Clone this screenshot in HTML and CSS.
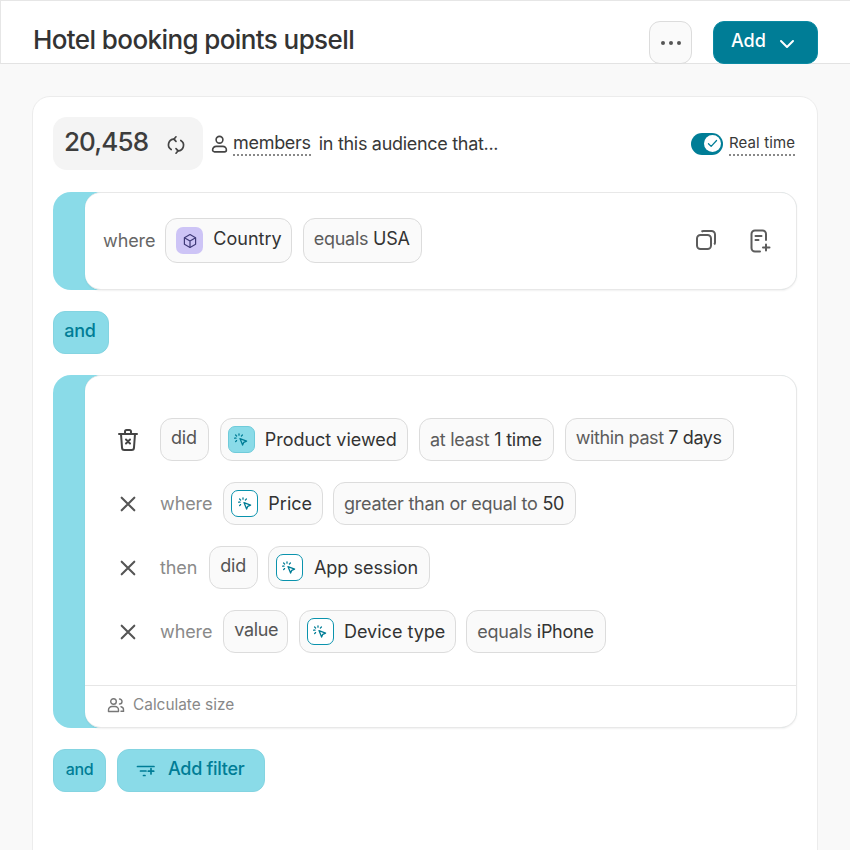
FILE: index.html
```html
<!DOCTYPE html>
<html>
<head>
    <title>Hotel booking points upsell</title>
    <link rel="stylesheet" href="styles.css">
</head>
<body>
    <svg class="defs" width="0" height="0">
        <symbol id="click" viewBox="0 0 16 16">
            <path d="M7 6.600l6.600 2.500-2.800 1.200-1.200 2.800z" fill="none" stroke="currentColor" stroke-width="1.300" stroke-linejoin="round"/>
            <path d="M6 1.800v1.400M2.600 3l1 1M1.600 6.200H3M2.600 9.600l1-1M9.400 3l-1 1" fill="none" stroke="currentColor" stroke-width="1.300" stroke-linecap="round" stroke-dasharray="1.200 .1"/>
        </symbol>
        <symbol id="cross" viewBox="0 0 20 20">
            <path d="M3 3l14 14M17 3L3 17" fill="none" stroke="currentColor" stroke-width="2.300" stroke-linecap="round"/>
        </symbol>
    </svg>

    <header class="topbar">
        <h1>Hotel booking points upsell</h1>
        <button class="more-btn">
            <svg width="24" height="6" viewBox="0 0 24 6"><circle cx="4" cy="3" r="2" /><circle cx="12" cy="3" r="2" /><circle cx="20" cy="3" r="2" /></svg>
        </button>
        <button class="add-btn">Add
            <svg width="16" height="10" viewBox="0 0 16 10"><path d="M2 2l6 6 6-6" fill="none" stroke="#fff" stroke-width="2" stroke-linecap="round" stroke-linejoin="round"/></svg>
        </button>
    </header>

    <main class="content">
        <section class="card">
            <div class="summary">
                <div class="count">
                    <span>20,458</span>
                    <svg width="20" height="20" viewBox="0 0 20 20" fill="none" stroke="#444" stroke-width="1.700" stroke-linecap="round" stroke-linejoin="round">
                        <path d="M8.500 4.200H8A5.600 5.600 0 0 0 5.200 14.600M11.500 15.800h.5A5.600 5.600 0 0 0 14.800 5.400"/>
                        <path d="M10 1.800L7.800 4.200 10 6.400M10 13.600l2.200 2.200L10 18.200"/>
                    </svg>
                </div>
                <svg class="person" width="17" height="20" viewBox="0 0 18 20" fill="none" stroke="#444" stroke-width="1.700">
                    <circle cx="9" cy="5.500" r="3.600"/>
                    <path d="M5.500 12.500h7a3.800 3.800 0 0 1 3.800 3.800 2 2 0 0 1-2 2H3.700a2 2 0 0 1-2-2 3.800 3.800 0 0 1 3.800-3.800z"/>
                </svg>
                <span class="dotted members">members</span>
                <span class="audience">in this audience that...</span>
                <div class="realtime">
                    <span class="toggle">
                        <span class="knob">
                            <svg width="11" height="9" viewBox="0 0 12 10"><path d="M1.500 5.200l3 3 6-6.500" fill="none" stroke="#007d96" stroke-width="1.400" stroke-linecap="round" stroke-linejoin="round"/></svg>
                        </span>
                    </span>
                    <span class="dotted">Real time</span>
                </div>
            </div>

            <div class="group">
                <div class="panel panel-single">
                    <span class="word">where</span>
                    <span class="chip chip-icon chip-wide chip-up">
                        <span class="tile tile-purple">
                            <svg width="16" height="16" viewBox="0 0 16 16" fill="none" stroke="#3f3a78" stroke-width="1.200" stroke-linejoin="round"><path d="M8 1.600l5.600 3.100v6.600L8 14.400l-5.600-3.100V4.700z"/><path d="M2.400 4.700L8 8l5.600-3.300M8 8v6.400"/></svg>
                        </span>
                        <span class="label">Country</span>
                    </span>
                    <span class="chip chip-up"><span><em>equals</em> USA</span></span>
                    <div class="actions">
                        <svg width="22" height="22" viewBox="0 0 22 22" fill="none" stroke="#5c5c5c" stroke-width="2" stroke-linejoin="round"><rect x="2" y="6" width="14" height="14" rx="3.500"/><path d="M6.500 2.800C7 2.300 7.600 2 8.400 2h8.100A3.500 3.500 0 0 1 20 5.500v8.100c0 .8-.3 1.400-.8 1.900"/></svg>
                        <svg width="22" height="24" viewBox="0 0 22 24" fill="none" stroke="#5c5c5c" stroke-width="2" stroke-linecap="round" stroke-linejoin="round"><path d="M17 11V5a3.500 3.500 0 0 0-3.500-3.500H6A3.500 3.500 0 0 0 2.500 5v14A3.500 3.500 0 0 0 6 22.500h5"/><path d="M6.500 7h6M6.500 11h3M17 15.500v6M14 18.500h6.500"/></svg>
                    </div>
                </div>
            </div>

            <button class="pill pill-and">and</button>

            <div class="group">
                <div class="panel panel-rows">
                    <div class="rows">
                        <div class="row">
                            <svg class="row-icon" width="22" height="24" viewBox="0 0 22 24" fill="none" stroke="#444" stroke-width="2" stroke-linecap="round" stroke-linejoin="round"><path d="M2 6h18M8 5.500V3.500a1.500 1.500 0 0 1 1.500-1.500h3A1.500 1.500 0 0 1 14 3.500v2M4 6l1 13.500a2.500 2.500 0 0 0 2.500 2.500h7a2.500 2.500 0 0 0 2.500-2.500L18 6"/><path d="M9 11.500l4 4M13 11.500l-4 4"/></svg>
                            <span class="chip chip-up chip-soft"><span>did</span></span>
                            <span class="chip chip-icon">
                                <span class="tile tile-teal"><svg width="16" height="16"><use href="#click"/></svg></span>
                                <span class="label">Product viewed</span>
                            </span>
                            <span class="chip"><span><em>at least</em> 1 time</span></span>
                            <span class="chip chip-up chip-narrow"><span><em>within past</em> 7 days</span></span>
                        </div>
                        <div class="row">
                            <svg class="row-icon x-icon" width="18" height="18"><use href="#cross"/></svg>
                            <span class="word word-light">where</span>
                            <span class="chip chip-icon chip-tight">
                                <span class="tile tile-outline"><svg width="16" height="16"><use href="#click"/></svg></span>
                                <span class="label">Price</span>
                            </span>
                            <span class="chip"><span><em>greater than or equal to</em> 50</span></span>
                        </div>
                        <div class="row">
                            <svg class="row-icon x-icon" width="18" height="18"><use href="#cross"/></svg>
                            <span class="word word-light">then</span>
                            <span class="chip chip-up chip-soft chip-then"><span>did</span></span>
                            <span class="chip chip-icon chip-app">
                                <span class="tile tile-outline"><svg width="16" height="16"><use href="#click"/></svg></span>
                                <span class="label">App session</span>
                            </span>
                        </div>
                        <div class="row">
                            <svg class="row-icon x-icon" width="18" height="18"><use href="#cross"/></svg>
                            <span class="word word-light">where</span>
                            <span class="chip chip-up chip-soft chip-narrow chip-value"><span>value</span></span>
                            <span class="chip chip-icon chip-tight">
                                <span class="tile tile-outline"><svg width="16" height="16"><use href="#click"/></svg></span>
                                <span class="label">Device type</span>
                            </span>
                            <span class="chip"><span><em>equals</em> iPhone</span></span>
                        </div>
                    </div>
                    <div class="size-bar">
                        <svg width="18" height="16" viewBox="0 0 18 16" fill="none" stroke="#777" stroke-width="1.400"><circle cx="6.500" cy="4.500" r="2.800"/><path d="M1.500 14.500v-1.500a3.500 3.500 0 0 1 3.500-3.500h3a3.500 3.500 0 0 1 3.500 3.500v1.500z" stroke-linejoin="round"/><path d="M12.500 2a2.500 2.500 0 1 1 0 5M14 9.700a3 3 0 0 1 2.500 3v1.500H14" stroke-linecap="round"/></svg>
                        Calculate size
                    </div>
                </div>
            </div>

            <div class="bottom-actions">
                <button class="pill pill-and pill-small">and</button>
                <button class="pill pill-filter">
                    <svg width="20" height="16" viewBox="0 0 20 16" fill="none" stroke="#007d96" stroke-width="1.700" stroke-linecap="round"><path d="M1.500 3.500h16.500M4.500 8h5.500M7.500 12.500h1.500M15 5.500v5.500M12.300 8.200h5.400"/></svg>
                    Add filter
                </button>
            </div>
        </section>
    </main>
</body>
</html>
```

FILE: styles.css
```css
* {
    box-sizing: border-box;
}
html, body {
    height: 850px;
    overflow: hidden;
}
body {
    margin: 0;
    background: #f9f9f9;
    color: #383838;
    font-family: Inter, "Noto Sans", sans-serif;
}
button {
    font-family: inherit;
    cursor: pointer;
}
.defs {
    display: block;
    height: 0;
}

.topbar {
    display: flex;
    align-items: flex-start;
    height: 64px;
    padding: 20px 32px 0 32px;
    background: #fff;
    border-top: 1px solid #e6e6e6;
    border-bottom: 1px solid #e3e3e3;
    border-left: 1px solid #e6e6e6;
}
.topbar h1 {
    flex: 1;
    margin: 1px 0 0;
    font-size: 26px;
    line-height: 36px;
    font-weight: 500;
    letter-spacing: -0.6px;
    color: #333;
}
.more-btn {
    display: flex;
    align-items: center;
    justify-content: center;
    width: 43px;
    height: 43px;
    margin-right: 21px;
    padding: 0;
    background: #fafafa;
    border: 1px solid #dcdcdc;
    border-radius: 11px;
}
.more-btn svg {
    fill: #555;
}
.add-btn {
    display: flex;
    align-items: center;
    gap: 13px;
    width: 105px;
    height: 43px;
    padding: 0 0 4px 17px;
    background: #007d96;
    border: 1px solid #0a8aa3;
    border-radius: 11px;
    color: #fff;
    font-size: 18px;
    font-weight: 500;
}
.add-btn svg {
    margin-top: 6px;
}

.content {
    padding: 32px 32px 0 32px;
}
.card {
    height: 780px;
    padding: 20px 20px 0 20px;
    background: #fff;
    border: 1px solid #ececec;
    border-radius: 18px;
}

.summary {
    display: flex;
    align-items: center;
    height: 53px;
    margin-bottom: 22px;
    font-size: 18px;
    letter-spacing: -0.3px;
}
.count {
    display: flex;
    align-items: center;
    flex: none;
    width: 150px;
    height: 53px;
    padding: 0 0 0 11px;
    margin-right: 8px;
    background: #f4f4f4;
    border-radius: 14px;
    font-size: 26px;
    font-weight: 500;
    letter-spacing: -0.9px;
    color: #3d3d3d;
}
.count span {
    margin-bottom: 5px;
}
.count svg {
    margin-left: 18px;
    margin-top: 3px;
}
.person {
    margin-right: 5px;
}
.dotted {
    border-bottom: 2px dotted #888;
    line-height: 22px;
}
.members {
    margin-right: 8px;
}
.realtime {
    display: flex;
    align-items: center;
    gap: 6px;
    margin-left: auto;
    margin-right: 2px;
    font-size: 15px;
    letter-spacing: 0.1px;
}
.toggle {
    display: flex;
    align-items: center;
    justify-content: flex-end;
    width: 32px;
    height: 22px;
    padding-right: 2px;
    background: #007d96;
    border-radius: 11px;
}
.knob {
    display: flex;
    align-items: center;
    justify-content: center;
    width: 17px;
    height: 17px;
    background: #fff;
    border-radius: 50%;
}

.group {
    padding-left: 32px;
    background: #8adbe8;
    border-radius: 18px;
}
.panel {
    background: #fff;
    border: 1px solid #e8e8e8;
    border-left: 0;
    border-radius: 16px;
    box-shadow: 0 1px 2px rgba(0, 0, 0, 0.06);
}
.panel-single {
    display: flex;
    align-items: center;
    gap: 11px;
    height: 98px;
    padding: 0 25px 0 18px;
}
.panel-single .chip {
    height: 45px;
    margin-top: -1px;
}
.actions {
    display: flex;
    gap: 32px;
    margin-left: auto;
}

.word {
    font-size: 18px;
    color: #666;
    padding-bottom: 1px;
    letter-spacing: -0.1px;
}
.panel-single .word {
    margin-right: -1px;
}
.word-light {
    color: #8a8a8a;
}
.chip {
    display: inline-flex;
    align-items: center;
    flex: none;
    height: 43px;
    padding: 0 11px 0 10px;
    background: #fafafa;
    border: 1px solid #dcdcdc;
    border-radius: 12px;
    font-size: 18px;
    color: #333;
    letter-spacing: -0.25px;
    white-space: nowrap;
}
.chip em {
    font-style: normal;
    color: #5c5c5c;
}
.chip-up > span:last-child {
    margin-bottom: 4px;
}
.chip-soft {
    color: #555;
}
.chip-narrow {
    letter-spacing: -0.4px;
}
.chip-value {
    padding-right: 9px;
}
.chip-tight {
    margin-right: -1px;
}
.chip-then {
    margin-left: 1px;
    margin-right: -1px;
}
.chip-icon {
    gap: 10px;
    padding: 0 10px 0 7px;
    letter-spacing: 0;
}
.chip-wide {
    padding: 0 9px 0 10px;
}
.chip-app {
    padding-right: 11px;
}
.chip-app .label {
    margin-left: 1px;
}
.tile {
    display: flex;
    align-items: center;
    justify-content: center;
    flex: none;
    width: 27px;
    height: 27px;
    border-radius: 7px;
    color: #007d96;
}
.tile-purple {
    background: #cdc4f6;
}
.tile-teal {
    background: #8adbe8;
    border: 1px solid #6fcbda;
}
.tile-outline {
    background: #fff;
    border: 1.700px solid #0a93ad;
}

.pill {
    height: 43px;
    background: #8adbe8;
    border: 1px solid #84d4e1;
    border-radius: 12px;
    color: #007d96;
    font-size: 18px;
    font-weight: 500;
    letter-spacing: -0.3px;
}
.pill-and {
    display: block;
    width: 56px;
    margin: 21px 0 21px;
    padding: 0 2px 5px 0;
}

.panel-rows {
    height: 353px;
    padding-top: 42px;
}
.rows {
    display: flex;
    flex-direction: column;
    gap: 21px;
    height: 267px;
    padding-left: 32px;
}
.row {
    display: flex;
    align-items: center;
    gap: 11px;
}
.row-icon {
    width: 22px;
    margin-right: 10px;
}
.x-icon {
    color: #555;
    padding: 0 2px;
}
.size-bar {
    display: flex;
    align-items: center;
    gap: 8px;
    height: 38px;
    padding-left: 22px;
    border-top: 1px solid #e6e6e6;
    font-size: 15.400px;
    color: #888;
}

.bottom-actions {
    display: flex;
    gap: 11px;
    margin-top: 21px;
}
.pill-small {
    width: 53px;
    margin: 0;
    padding: 0 0 4px;
    font-size: 16px;
}
.pill-filter {
    display: flex;
    align-items: center;
    gap: 12px;
    width: 148px;
    padding: 0 0 4px 18px;
}
.pill-filter svg {
    margin-top: 4px;
}
```
